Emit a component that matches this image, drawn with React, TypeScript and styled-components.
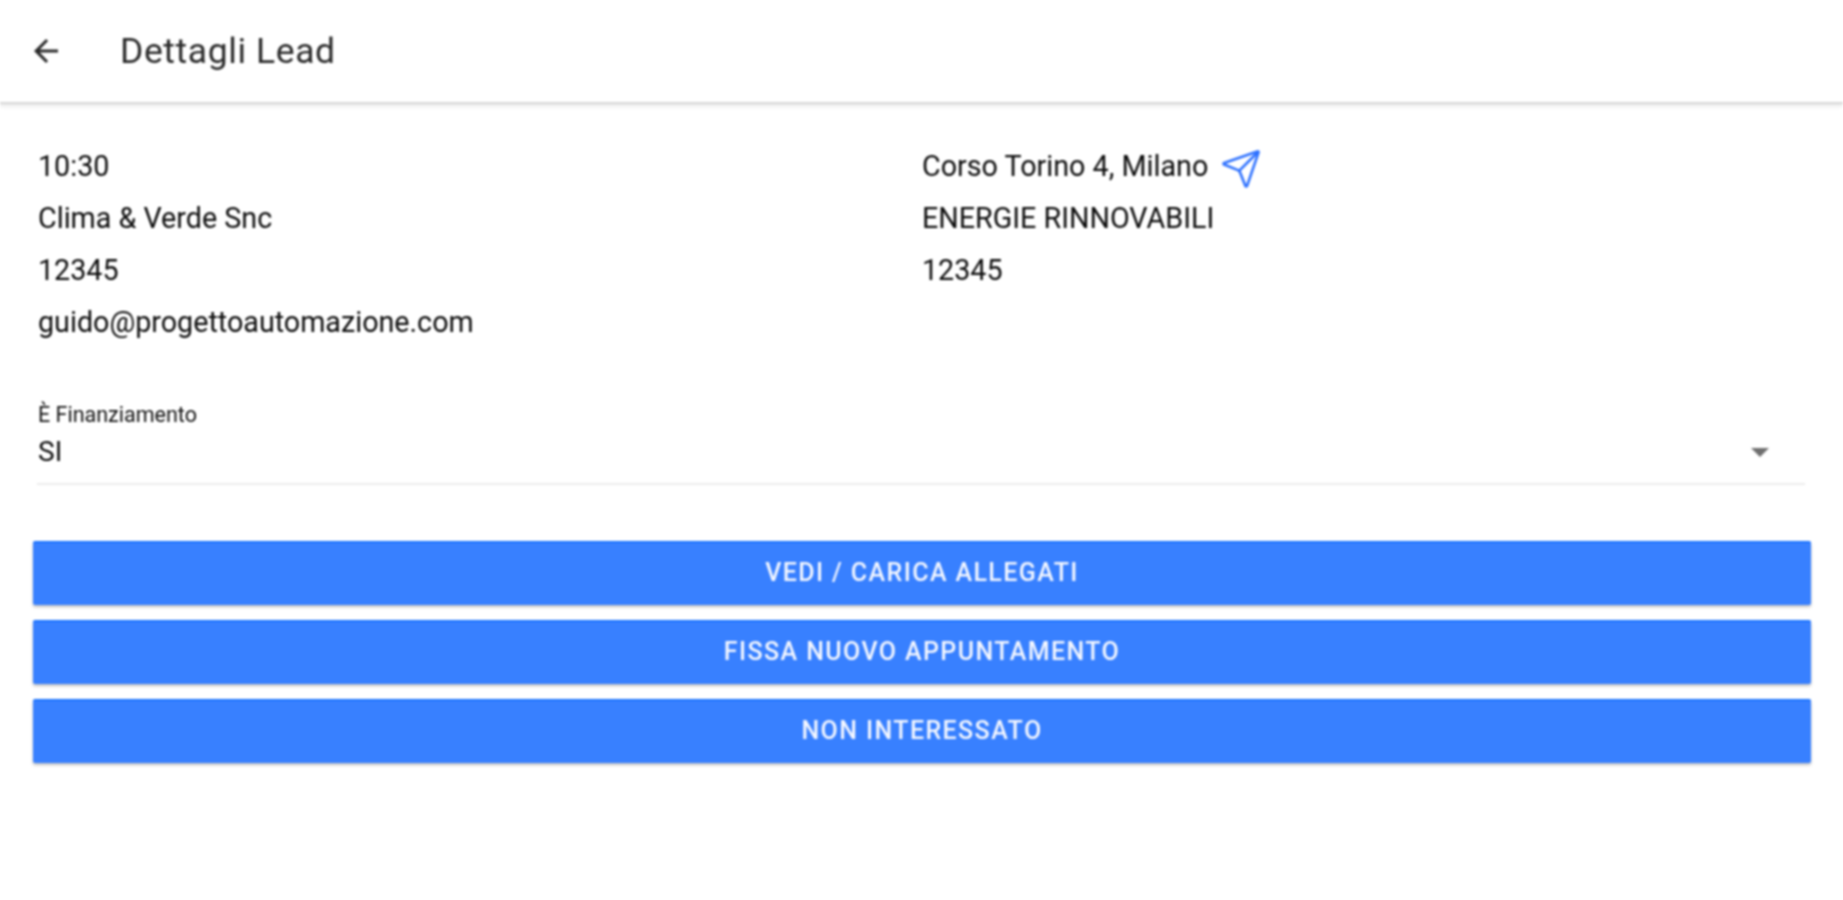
import React from 'react';
import styled, { createGlobalStyle } from 'styled-components';
import { MdArrowBack } from 'react-icons/md';
import { Send } from 'lucide-react';

const GlobalStyle = createGlobalStyle`
  html, body {
    margin: 0;
    padding: 0;
    background: #ffffff;
    font-family: Roboto, "Liberation Sans", sans-serif;
  }
`;

const Page = styled.div`
  width: 1843px;
  height: 900px;
  overflow: hidden;
  background: #ffffff;
  filter: blur(0.8px);
`;

const Toolbar = styled.header`
  height: 102px;
  display: flex;
  align-items: center;
  padding-left: 28px;
  gap: 56px;
  border-bottom: 2px solid #d8d8d8;
  box-shadow: 0 2px 4px rgba(0, 0, 0, 0.1);
  color: #2b2b2b;
`;

const Title = styled.h1`
  margin: 0;
  font-size: 35.5px;
  font-weight: 400;
  letter-spacing: 0.6px;
`;

const Content = styled.main`
  padding: 36px 32px 0 33px;
`;

const InfoGrid = styled.div`
  display: grid;
  grid-template-columns: 884px 1fr;
  padding-left: 5px;
`;

const InfoColumn = styled.div`
  display: flex;
  flex-direction: column;
`;

const InfoRow = styled.div`
  display: flex;
  align-items: center;
  gap: 12px;
  height: 52px;
  font-size: 28.7px;
  color: #0c0c0c;
`;

const NavIcon = styled(Send)`
  color: #2f72ff;
  margin-top: 5px;
`;

const Field = styled.div`
  margin: 57px 6px 0 4px;
  border-bottom: 2px solid #ececec;
  height: 80px;
  box-sizing: border-box;
  padding-left: 1px;
`;

const FieldLabel = styled.div`
  font-size: 21.5px;
  line-height: 20px;
  color: #111;
`;

const FieldValue = styled.div`
  display: flex;
  align-items: center;
  justify-content: space-between;
  font-size: 28px;
  line-height: 36px;
  margin-top: 9px;
  color: #0c0c0c;
`;

const Caret = styled.span`
  width: 0;
  height: 0;
  margin-right: 36px;
  border-left: 9px solid transparent;
  border-right: 9px solid transparent;
  border-top: 9px solid #6f6f6f;
`;

const Actions = styled.div`
  display: flex;
  flex-direction: column;
  gap: 15px;
  margin-top: 56px;
`;

const ActionButton = styled.button`
  height: 64px;
  border: 0;
  border-top: 2px solid #1c74ff;
  border-radius: 2px;
  padding: 0 0 3px;
  background: #3880ff;
  color: #f4f7ff;
  font-family: Roboto, "Liberation Sans", sans-serif;
  font-size: 25px;
  font-weight: 500;
  letter-spacing: 1.4px;
  text-transform: uppercase;
  box-shadow: 0 2px 3px rgba(0, 0, 0, 0.25);
`;

export default function App(): React.ReactElement {
  return (
    <Page>
      <GlobalStyle />
      <Toolbar>
        <MdArrowBack size={36} />
        <Title>Dettagli Lead</Title>
      </Toolbar>
      <Content>
        <InfoGrid>
          <InfoColumn>
            <InfoRow>10:30</InfoRow>
            <InfoRow>Clima &amp; Verde Snc</InfoRow>
            <InfoRow>12345</InfoRow>
            <InfoRow>guido@progettoautomazione.com</InfoRow>
          </InfoColumn>
          <InfoColumn>
            <InfoRow>
              Corso Torino 4, Milano
              <NavIcon size={42} strokeWidth={1.5} />
            </InfoRow>
            <InfoRow>ENERGIE RINNOVABILI</InfoRow>
            <InfoRow>12345</InfoRow>
          </InfoColumn>
        </InfoGrid>
        <Field>
          <FieldLabel>È Finanziamento</FieldLabel>
          <FieldValue>
            SI
            <Caret />
          </FieldValue>
        </Field>
        <Actions>
          <ActionButton>Vedi / Carica Allegati</ActionButton>
          <ActionButton>Fissa nuovo appuntamento</ActionButton>
          <ActionButton>Non interessato</ActionButton>
        </Actions>
      </Content>
    </Page>
  );
}
